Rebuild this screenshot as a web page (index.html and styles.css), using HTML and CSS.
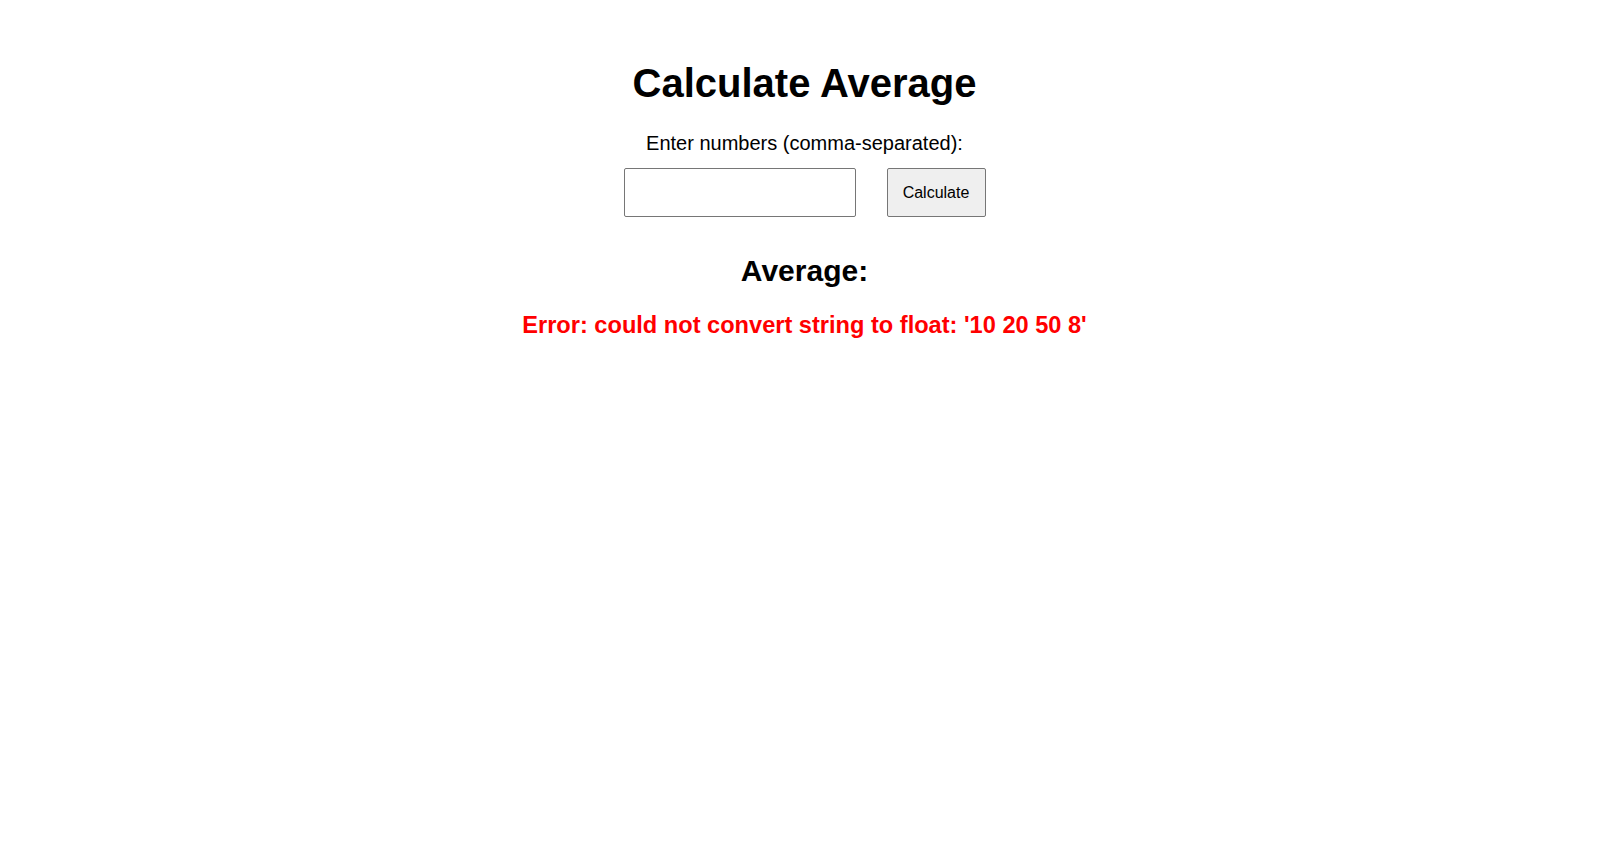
FILE: index.html
```html
<!DOCTYPE html>
<html>
<head>
<meta charset="utf-8">
<link rel="stylesheet" href="styles.css">
</head>
<body>
<div class="page">
  <h1 class="title">Calculate Average</h1>
  <form class="form">
    <label class="label" for="nums">Enter numbers (comma-separated):</label>
    <div class="row">
      <input class="field" id="nums" type="text">
      <button class="btn" type="button">Calculate</button>
    </div>
  </form>
  <h2 class="subtitle">Average:</h2>
  <p class="error">Error: could not convert string to float: '10 20 50 8'</p>
</div>
</body>
</html>
```
FILE: styles.css
```css
body {
  margin: 0;
  font-family: "Liberation Sans", Arial, sans-serif;
  background: #fff;
  color: #000;
}
.page {
  display: flex;
  flex-direction: column;
  align-items: center;
  padding-top: 61px;
  padding-right: 14px;
}
.title {
  font-size: 40px;
  font-weight: bold;
  margin: 0;
}
.form {
  display: flex;
  flex-direction: column;
  align-items: center;
  margin-top: 26px;
}
.label {
  font-size: 20px;
}
.row {
  display: flex;
  gap: 31px;
  margin-top: 13px;
}
.field {
  width: 232px;
  height: 49px;
  box-sizing: border-box;
  border: 1px solid #767676;
  border-radius: 2px;
  font-size: 16px;
  padding: 0 8px;
}
.btn {
  width: 99px;
  height: 49px;
  box-sizing: border-box;
  border: 1px solid #767676;
  border-radius: 2px;
  background: #efefef;
  font-family: "Liberation Sans", Arial, sans-serif;
  font-size: 16px;
  color: #000;
}
.subtitle {
  font-size: 30px;
  margin: 37px 0 0;
}
.error {
  color: #ff0000;
  font-weight: bold;
  font-size: 23.6px;
  margin: 24px 0 0;
}
```
